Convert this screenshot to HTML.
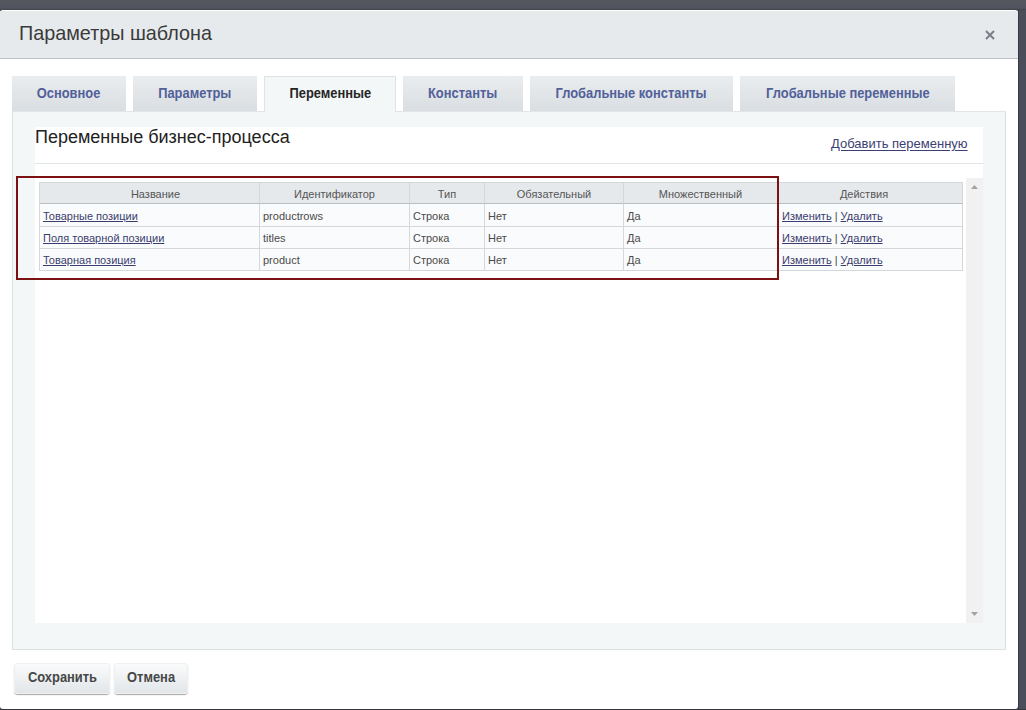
<!DOCTYPE html>
<html><head><meta charset="utf-8">
<style>
*{margin:0;padding:0;box-sizing:border-box}
html,body{width:1026px;height:710px;overflow:hidden;background:linear-gradient(90deg,#444955 0,#444955 60%,#4a4e58 100%);font-family:"Liberation Sans",sans-serif;position:relative}
div,svg,table{position:absolute}
#topbar{left:0;top:0;width:1026px;height:10px;background:linear-gradient(#55575c,#535560 30%,#525460 80%,#3f4147)}
#dlg{left:0;top:10px;width:1018px;height:699px;background:#fff;border-radius:3px;overflow:hidden}
#hdr{left:0;top:11px;width:1018px;height:48px;background:#e7eaed;border-bottom:1px solid #bfc3c7;border-radius:0}
#title{left:19px;top:21px;font-size:21px;color:#3a3a3a;white-space:nowrap;transform:scaleX(0.942);transform-origin:0 0}
#close{left:985px;top:30px;width:10px;height:10px}
.tab{top:76px;height:35px;background:linear-gradient(#eaedef,#d9dee2);font-weight:bold;font-size:14px;color:#52609a;text-align:center;line-height:34px;white-space:nowrap}
.tab.act{background:#f4f7f8;color:#262626;border:1px solid #e0e3e6;border-bottom:none;height:36px;line-height:33px}
#panel{left:12px;top:111px;width:994px;height:539px;background:#f4f7f8;border:1px solid #dde1e4;border-top-color:#e3e6e8}
#inner{left:35px;top:127px;width:948px;height:496px;background:#fff}
#sec{left:35px;top:127px;font-size:18px;color:#222;white-space:nowrap}
#add{left:831px;top:136px;font-size:13px;color:#3c3f72;text-decoration:underline;text-underline-offset:2px;white-space:nowrap}
#hline{left:35px;top:163px;width:948px;height:1px;background:#e2e5e7}
#sbar{left:966px;top:178px;width:17px;height:445px;background:#f1f1f1}
table{left:39px;top:182px;border-collapse:separate;border-spacing:0;font-size:11px;color:#4a4a4a;border-top:1px solid #d3d8db;border-left:1px solid #d3d8db;table-layout:fixed}
td,th{border-right:1px solid #d3d8db;border-bottom:1px solid #d3d8db;padding:0 0 0 3px;white-space:nowrap;text-align:left;overflow:hidden}
th{font-weight:normal;background:#e5e9ec;color:#555;height:21px;border-bottom:1px solid #b9bec2;text-align:center;padding:2px 0 0 0}
tr.r1 td{height:23px}
tr.r2 td{height:22px;padding-top:0}
td{background:#fafbfc;padding-top:2px}
td a{color:#3a3d6e;text-decoration:underline}
#red{left:16px;top:176px;width:763px;height:104px;border:2px solid #7b1113}
.tab span,.btn span{display:inline-block;transform:scaleX(0.92);transform-origin:50% 50%}
.btn{top:663px;height:31px;border-radius:4px;background:linear-gradient(#fbfcfc,#e1e5e8);box-shadow:0 1px 1px rgba(0,0,0,.35),inset 0 0 0 1px #eef0f2;font-weight:bold;font-size:14px;color:#474747;text-align:center;line-height:29px}
</style></head><body>
<div id="topbar"></div>
<div style="left:1018px;top:10px;width:1px;height:700px;background:#383b44"></div>
<div style="left:0;top:709px;width:1026px;height:1px;background:#35373d"></div>
<div id="dlg"></div>
<div id="hdr"></div>
<div id="title">Параметры шаблона</div>
<svg id="close" viewBox="0 0 10 10"><path d="M1 1L9 9M9 1L1 9" stroke="#7a7f87" stroke-width="2"/></svg>
<div class="tab" style="left:12px;width:114px"><span>Основное</span></div>
<div class="tab" style="left:133px;width:124px"><span>Параметры</span></div>
<div class="tab" style="left:403px;width:120px"><span>Константы</span></div>
<div class="tab" style="left:530px;width:203px"><span>Глобальные константы</span></div>
<div class="tab" style="left:740px;width:215px"><span>Глобальные переменные</span></div>
<div id="panel"></div>
<div class="tab act" style="left:264px;width:132px"><span>Переменные</span></div>
<div id="inner"></div>
<div id="sec">Переменные бизнес-процесса</div>
<div id="add">Добавить переменную</div>
<div id="hline"></div>
<div id="sbar"></div>
<svg style="left:971px;top:185px;width:7px;height:4px" viewBox="0 0 7 4"><path d="M0 4L3.5 0L7 4Z" fill="#a3a3a3"/></svg>
<svg style="left:971px;top:612px;width:7px;height:4px" viewBox="0 0 7 4"><path d="M0 0L3.5 4L7 0Z" fill="#a3a3a3"/></svg>
<table>
  <tr><th style="width:220px;padding-left:12px">Название</th><th style="width:150px">Идентификатор</th><th style="width:75px">Тип</th><th style="width:139px">Обязательный</th><th style="width:154px">Множественный</th><th style="width:185px;padding-right:12px">Действия</th></tr>
  <tr class="r1"><td><a>Товарные позиции</a></td><td>productrows</td><td>Строка</td><td>Нет</td><td>Да</td><td style="padding-left:4px"><a>Изменить</a> | <a>Удалить</a></td></tr>
  <tr class="r2"><td><a>Поля товарной позиции</a></td><td>titles</td><td>Строка</td><td>Нет</td><td>Да</td><td style="padding-left:4px"><a>Изменить</a> | <a>Удалить</a></td></tr>
  <tr class="r2"><td><a>Товарная позиция</a></td><td>product</td><td>Строка</td><td>Нет</td><td>Да</td><td style="padding-left:4px"><a>Изменить</a> | <a>Удалить</a></td></tr>
</table>
<div id="red"></div>
<div class="btn" style="left:14px;width:96px"><span>Сохранить</span></div>
<div class="btn" style="left:114px;width:74px"><span>Отмена</span></div>
</body></html>
